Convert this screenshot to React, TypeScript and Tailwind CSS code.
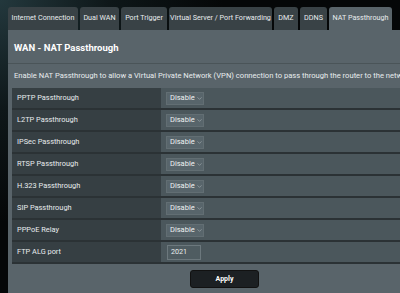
import { ChevronDown } from "lucide-react";

const tabs = [
  { label: "Internet Connection", w: "w-[70px]" },
  { label: "Dual WAN", w: "w-[39px]" },
  { label: "Port Trigger", w: "w-[46px]" },
  { label: "Virtual Server / Port Forwarding", w: "w-[103px]" },
  { label: "DMZ", w: "w-[24px]" },
  { label: "DDNS", w: "w-[27px]" },
  { label: "NAT Passthrough", w: "w-[63px]", active: true },
];

const rows = [
  "PPTP Passthrough",
  "L2TP Passthrough",
  "IPSec Passthrough",
  "RTSP Passthrough",
  "H.323 Passthrough",
  "SIP Passthrough",
  "PPPoE Relay",
];

function Select() {
  return (
    <div className="flex h-[13px] w-[38px] items-center gap-[1px] border border-[#626e73] bg-[#58656b] pl-[3px] text-[7.5px] text-[#eef1f2]">
      <span>Disable</span>
      <ChevronDown className="h-[7px] w-[7px] text-[#c5cdd0]" strokeWidth={1.5} />
    </div>
  );
}

export default function App() {
  return (
    <div
      className="flex h-[293px] w-[400px] flex-col overflow-hidden bg-[radial-gradient(circle_at_0%_0%,#23383d_0%,#0e1719_22%,#050708_45%)] pl-[8px] pt-[7px] text-[#e8ecee]"
      style={{ fontFamily: "Roboto, 'Liberation Sans', sans-serif" }}
    >
      <div className="flex h-[23px] gap-[2px]">
        {tabs.map((t) => (
          <div
            key={t.label}
            className={`${t.w} flex shrink-0 items-center justify-center whitespace-nowrap rounded-t-[3px] text-[7.2px] ${
              t.active ? "bg-[#59646a]" : "bg-[#394246]"
            }`}
          >
            {t.label}
          </div>
        ))}
      </div>
      <div className="flex w-[420px] flex-1 flex-col bg-[#59646a]">
        <div className="flex h-[34px] items-end border-b border-[#4a5458] pb-[8px] pl-[6px] text-[9.5px] font-bold text-white">
          WAN - NAT Passthrough
        </div>
        <div className="flex h-[24px] items-center whitespace-nowrap pl-[6px] text-[7.6px]">
          Enable NAT Passthrough to allow a Virtual Private Network (VPN) connection to pass through the router to the network
        </div>
        <div className="ml-[4px] flex flex-col">
          {rows.map((r) => (
            <div key={r} className="flex h-[22px] border-b-[2px] border-[#2b3235]">
              <div className="flex w-[149px] items-center bg-[#363f43] pl-[5px] text-[7.4px]">{r}</div>
              <div className="flex flex-1 items-center bg-[#4b575c] pl-[5px]">
                <Select />
              </div>
            </div>
          ))}
          <div className="flex h-[22px] border-b-[2px] border-[#2b3235]">
            <div className="flex w-[149px] items-center bg-[#363f43] pl-[5px] text-[7.4px]">FTP ALG port</div>
            <div className="flex flex-1 items-center bg-[#4b575c] pl-[6px]">
              <div className="flex h-[15px] w-[34px] items-center border border-[#6c787d] bg-[#4f5c61] pl-[3px] text-[7.2px]">
                2021
              </div>
            </div>
          </div>
        </div>
        <div className="flex pl-[182px] pt-[6px]">
          <button className="h-[18px] w-[69px] rounded-[3px] border border-[#111] bg-[#1c2023] text-[7px] font-bold text-white">
            Apply
          </button>
        </div>
      </div>
    </div>
  );
}
